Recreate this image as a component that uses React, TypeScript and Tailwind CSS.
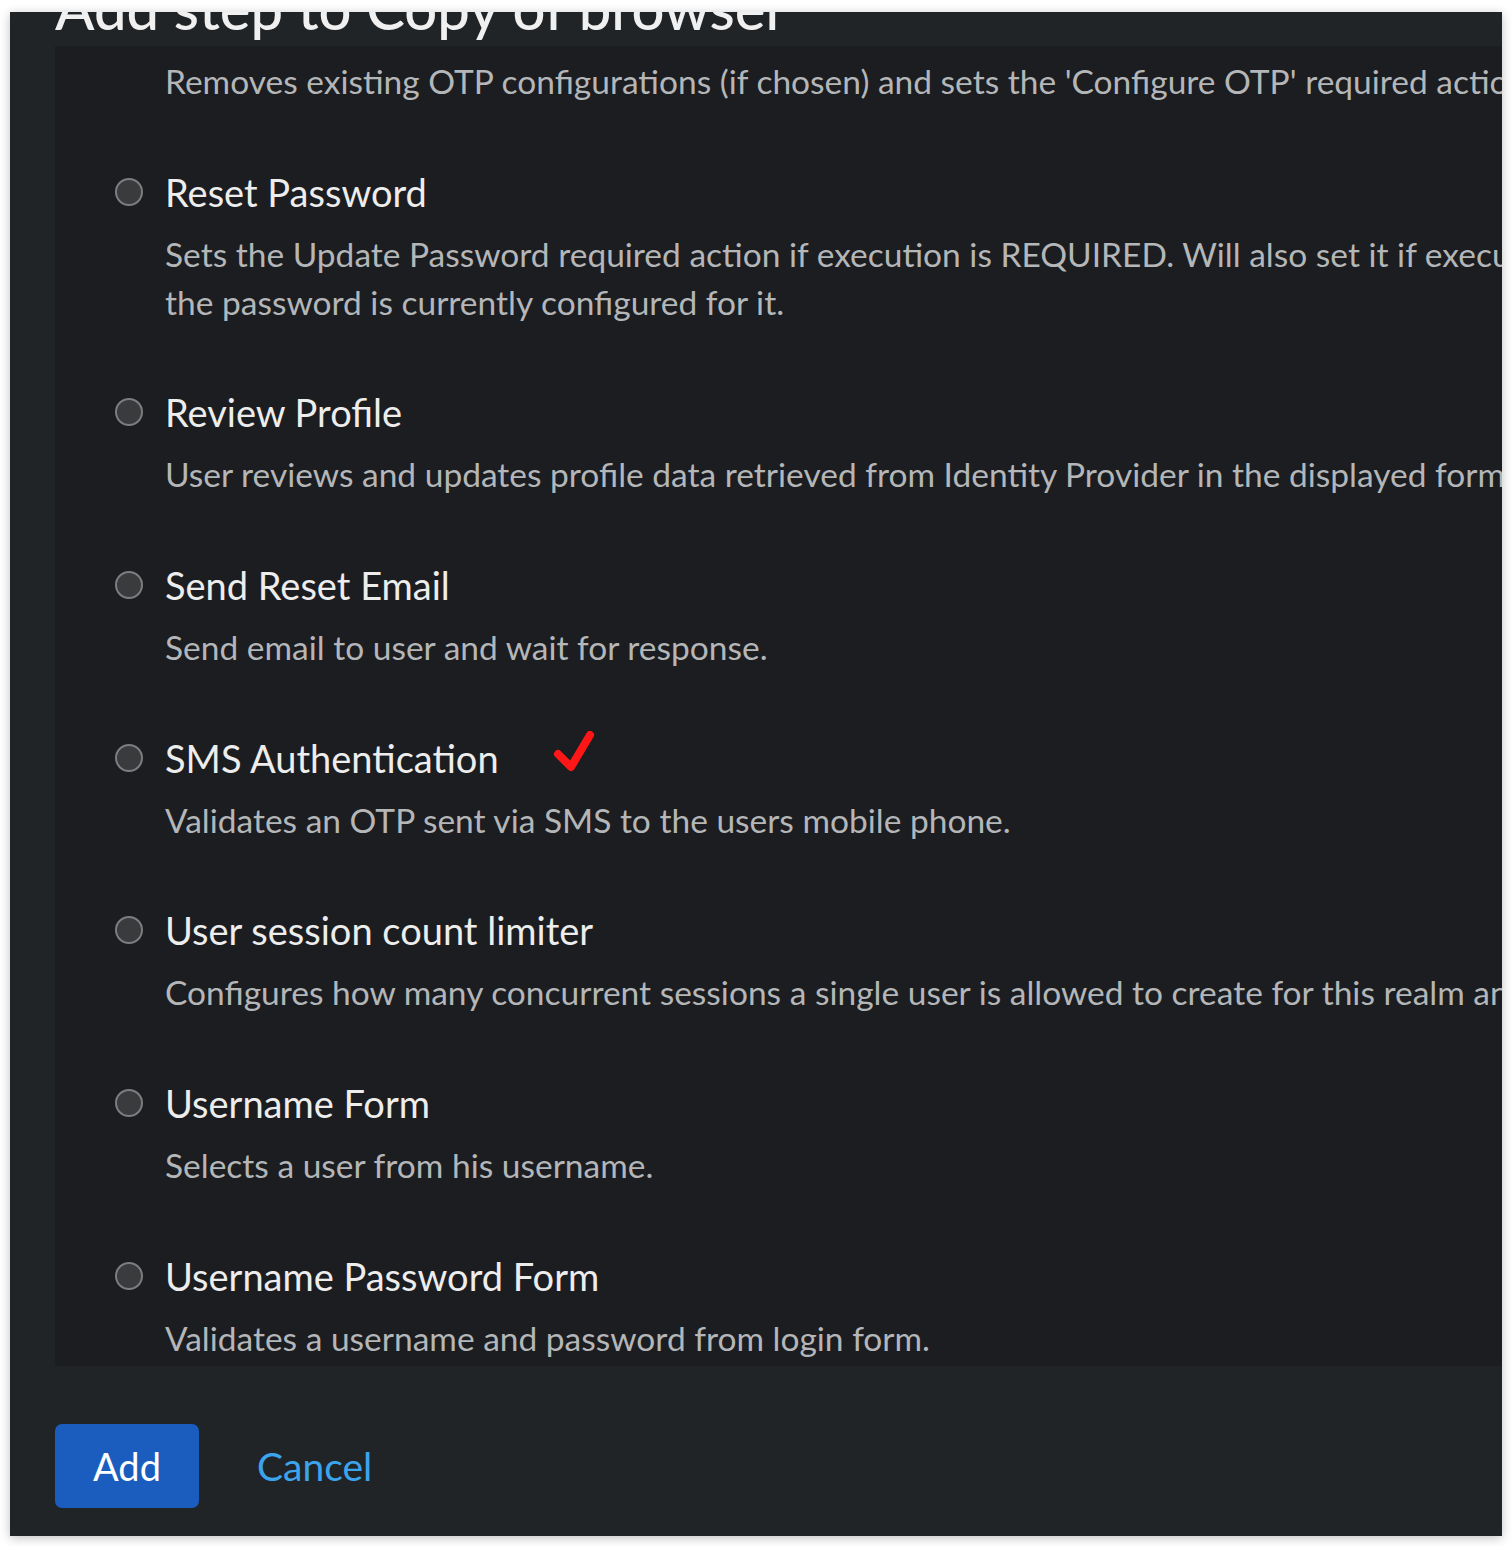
const steps = [
  {
    title: 'Reset OTP',
    desc: ["Removes existing OTP configurations (if chosen) and sets the 'Configure OTP' required action for the user."],
  },
  {
    title: 'Reset Password',
    desc: [
      'Sets the Update Password required action if execution is REQUIRED. Will also set it if execution is OPTIONAL and',
      'the password is currently configured for it.',
    ],
  },
  {
    title: 'Review Profile',
    desc: ['User reviews and updates profile data retrieved from Identity Provider in the displayed form'],
  },
  { title: 'Send Reset Email', desc: ['Send email to user and wait for response.'] },
  { title: 'SMS Authentication', desc: ['Validates an OTP sent via SMS to the users mobile phone.'], marked: true },
  {
    title: 'User session count limiter',
    desc: ['Configures how many concurrent sessions a single user is allowed to create for this realm and/or client'],
  },
  { title: 'Username Form', desc: ['Selects a user from his username.'] },
  { title: 'Username Password Form', desc: ['Validates a username and password from login form.'] },
];

const CheckMark = () => (
  <svg width="44" height="48" viewBox="0 0 44 48" className="ml-[54px] -mt-[6px]">
    <path d="M5 23 L18 36 L37 4" fill="none" stroke="#ff1717" strokeWidth="8" strokeLinecap="round" strokeLinejoin="round" />
  </svg>
);

const App = () => {
  return (
    <div className="w-[1512px] h-[1546px] bg-white pt-[12px] pl-[10px] font-['Lato',sans-serif]">
      <div className="w-[1492px] h-[1524px] bg-[#212427] overflow-hidden flex flex-col shadow-[0_2px_10px_rgba(0,0,0,0.25)]">
        {/* Header, scrolled mostly out of view */}
        <h1 className="pl-[45px] -mt-[33px] text-[58px] leading-none font-medium text-[#f0f0f0] whitespace-nowrap">
          Add step to Copy of browser
        </h1>

        {/* Step list */}
        <div className="ml-[45px] mt-[9px] w-[1500px] h-[1320px] bg-[#1b1d21] overflow-hidden">
          <div className="-mt-[57px] pl-[60px] flex flex-col gap-[56.7px]">
            {steps.map((s) => (
              <div key={s.title} className="flex items-start">
                <div className="w-[28px] h-[60px] flex items-center shrink-0">
                  <span className="w-[28px] h-[28px] rounded-full border-[2px] border-[#7b7d80] bg-[#3a3b3d]" />
                </div>
                <div className="ml-[22px] flex flex-col whitespace-nowrap">
                  <div className="flex items-center">
                    <span className="text-[38px] leading-[60px] text-[#ededed]">{s.title}</span>
                    {s.marked && <CheckMark />}
                  </div>
                  <div className="mt-[8px] text-[33.5px] leading-[48px] text-[#b4b6b8]">
                    {s.desc.map((d) => (
                      <div key={d}>{d}</div>
                    ))}
                  </div>
                </div>
              </div>
            ))}
          </div>
        </div>

        {/* Footer */}
        <div className="pl-[45px] mt-[58px] flex items-center">
          <button className="w-[144px] h-[84px] rounded-[7px] bg-[#1a5dbf] text-white text-[38px]">Add</button>
          <button className="ml-[58px] text-[39px] text-[#3ba4ed]">Cancel</button>
        </div>
      </div>
    </div>
  );
};

export default App;
